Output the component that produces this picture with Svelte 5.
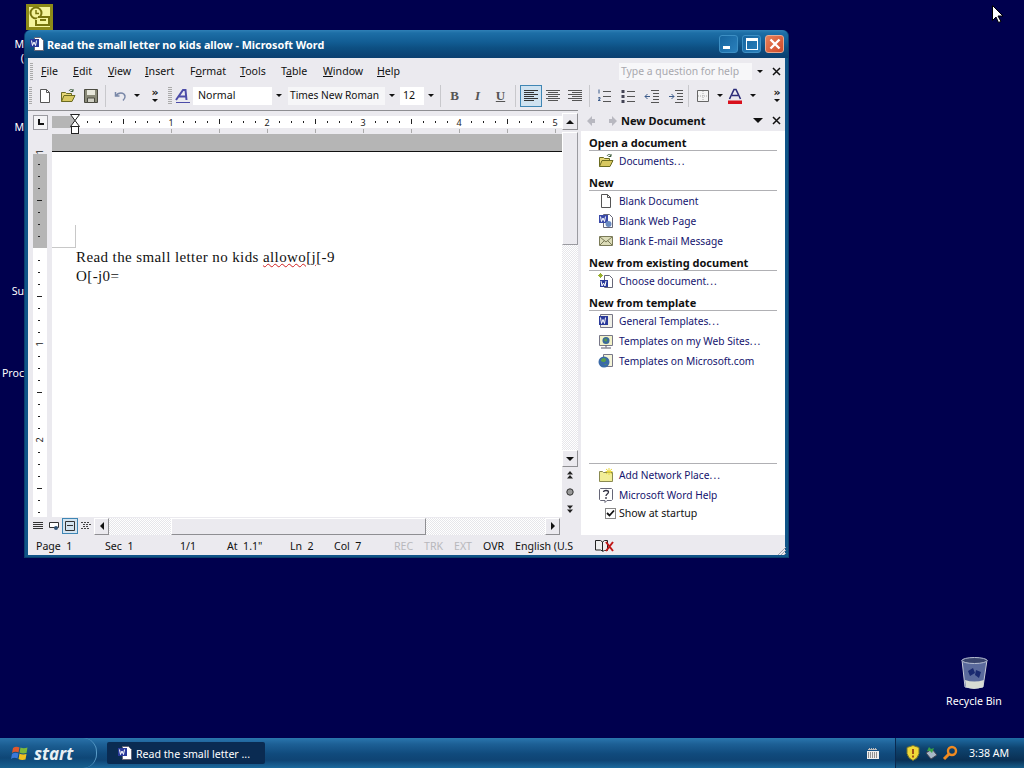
<script>
  const ui = '"Noto Sans", "DejaVu Sans", sans-serif'

  const icons = {
    doc: '<path d="M3.500 1.500h6l3 3v10h-9z" fill="#fff" stroke="#555"/><path d="M9.500 1.500v3h3" fill="none" stroke="#555"/>',
    open: '<path d="M1.500 13.500v-9h4l1 1h5v2" fill="#e8d878" stroke="#6b6b20"/><path d="M1.500 13.500l2.500-6h11l-3 6z" fill="#d8c860" stroke="#6b6b20"/><path d="M9 3c1-2 3-2 4 0M13 1v2.500h-2.500" fill="none" stroke="#3a5a3a"/>',
    save: '<path d="M1.500 1.500h13v13h-13z" fill="#8a8a78" stroke="#4a4a40"/><path d="M4 2h8v5H4z" fill="#e8e8dc"/><path d="M4.500 10h7v4.500h-7z" fill="#d0d0c4" stroke="#4a4a40"/>',
    undo: '<path d="M3.500 4v4h4M4 8c2-4 8-4 9 0 .5 2-1 3.500-2 4.500" fill="none" stroke="#7a88a8" stroke-width="1.500"/>',
    style: '<path d="M1 12L8 2h2.500l1 10M4 8.500h7" fill="none" stroke="#4c4ca8" stroke-width="2"/><path d="M1 14.500h14" stroke="#4c4ca8"/>',
    left: '<path d="M1 2.500h14M1 4.500h10M1 6.500h14M1 8.500h10M1 10.500h14M1 12.500h10" stroke="#333"/>',
    center: '<path d="M1 2.500h14M3 4.500h10M1 6.500h14M3 8.500h10M1 10.500h14M3 12.500h10" stroke="#555"/>',
    right: '<path d="M1 2.500h14M5 4.500h10M1 6.500h14M5 8.500h10M1 10.500h14M5 12.500h10" stroke="#555"/>',
    num: '<path d="M7 3.500h8M7 8.500h8M7 13.500h8" stroke="#555"/><path d="M3 1.500v4M2 10l2-.500v1.500l-2 1.500h2.500M2 12" fill="none" stroke="#3a5a8a"/>',
    bul: '<path d="M7 3.500h8M7 8.500h8M7 13.500h8" stroke="#555"/><path d="M1.500 2h3v3h-3zM1.500 7h3v3h-3zM1.500 12h3v3h-3z" fill="#445"/>',
    dec: '<path d="M7 2.500h8M9 5.500h6M9 8.500h6M9 11.500h6M7 14.500h8" stroke="#555"/><path d="M6 8.500H1M3.500 6L1 8.500 3.500 11" fill="none" stroke="#3a5a8a"/>',
    inc: '<path d="M7 2.500h8M9 5.500h6M9 8.500h6M9 11.500h6M7 14.500h8" stroke="#555"/><path d="M1 8.500h5M3.500 6L6 8.500 3.500 11" fill="none" stroke="#3a5a8a"/>',
    border: '<path d="M2.500 2.500h11v11h-11z" fill="#f4f4f4" stroke="#666"/><path d="M8 3v10M3 8h10" stroke="#aaa" stroke-dasharray="1 1"/>',
    color: '<path d="M2.500 11L7 1.500h2L13.500 11M5 7.500h6" fill="none" stroke="#2c2c78" stroke-width="1.600"/><path d="M1 12.500h14V16H1z" fill="#d8101c"/>',
    word: '<path d="M5.500 1.500h6l3 3v10h-9z" fill="#fff" stroke="#667"/><path d="M1 3h9v8H1z" fill="#2a3a9a"/><path d="M2.500 4.500l1 5 1.500-3.500 1.500 3.500 1-5" fill="none" stroke="#fff"/>',
    web: '<path d="M5.500 1.500h6l3 3v10h-9z" fill="#fff" stroke="#667"/><path d="M1 2h9v8H1z" fill="#3a4aa8"/><path d="M2.500 3.500l1 5 1.500-3.500 1.500 3.500 1-5" fill="none" stroke="#fff"/><circle cx="10.500" cy="11" r="3" fill="#6a8ac0"/>',
    mail: '<path d="M1.500 3.500h13v9h-13z" fill="#dcdcb8" stroke="#7a7a58"/><path d="M2 4l6 5 6-5M2 12l4.500-4.500M14 12L9.500 7.500" fill="none" stroke="#7a7a58"/>',
    choose: '<path d="M6.500 2.500h5l3 3v9h-8z" fill="#fff" stroke="#667"/><path d="M2 7h8v7H2z" fill="#2a3a9a"/><path d="M3 8l1 5 1.500-3 1.500 3 1-5" fill="none" stroke="#fff"/><path d="M1 1l3 3M4 1L1 4M2.500 0v5M0 2.500h5" stroke="#9ab030"/>',
    tmpl: '<path d="M2.500 1.500h12v13h-12z" fill="#f0f0e8" stroke="#778"/><path d="M1 3h9v9H1z" fill="#2a3a9a"/><path d="M2.500 4.500l1 6 1.500-4 1.500 4 1-6" fill="none" stroke="#fff"/>',
    site: '<path d="M1.500 2.500h13v10h-13z" fill="#f2f2c8" stroke="#778"/><circle cx="8" cy="7.500" r="3.500" fill="#3a6a9a"/><path d="M6 7c1-2 3-2 3 0s-2 2-3 0z" fill="#5a9a4a"/><path d="M8 12.500v2M3 15h10" stroke="#556"/>',
    ms: '<path d="M5.500 1.500h9v12h-9z" fill="#f4f4d8" stroke="#778"/><circle cx="6" cy="9" r="5.500" fill="#3a6aa8"/><path d="M3 7c2-3 5-2 5 0s-3 3-5 1zM6 12c1-1 2-1 3 0" fill="#5aa04a"/>',
    folderstar: '<path d="M1.500 14.500v-10h3l1 1h9v9z" fill="#f2ee98" stroke="#8a8a50"/><path d="M11 1v7M8 2l6 5M14 2L8 7M7.500 4.500h7" stroke="#e8d840"/>',
    help: '<path d="M2.500 1.500h11l1 1v10l-1 1H9l-2 2v-2H2.500l-1-1v-10z" fill="#fff" stroke="#667"/><path d="M5.500 5c0-2 5-2 5 0 0 2-2.500 2-2.500 4M8 10v2" fill="none" stroke="#334" stroke-width="1.300"/>'
  }

  const menu = [
    ['F', 'ile', 32], ['E', 'dit', 35], ['V', 'iew', 37], ['I', 'nsert', 45],
    ['F', 'ormat', 50, 1], ['T', 'ools', 41], ['T', 'able', 42, 1], ['W', 'indow', 54], ['H', 'elp', 40]
  ]

  const sections = [
    { title: 'Open a document', items: [['open', 'Documents...']] },
    { title: 'New', items: [['doc', 'Blank Document'], ['web', 'Blank Web Page'], ['mail', 'Blank E-mail Message']] },
    { title: 'New from existing document', items: [['choose', 'Choose document...']] },
    { title: 'New from template', items: [['tmpl', 'General Templates...'], ['site', 'Templates on my Web Sites...'], ['ms', 'Templates on Microsoft.com']] }
  ]

  const status = [
    ['Page  1', 69], ['Sec  1', 75], ['1/1', 47], ['At  1.1"', 63], ['Ln  2', 44], ['Col  7', 60],
    ['REC', 30, 1], ['TRK', 30, 1], ['EXT', 29, 1], ['OVR', 32], ['English (U.S', 79]
  ]

  // ruler marks, 96px to the inch, a tick every eighth
  const hTicks = Array.from({ length: 41 }, (_, i) => 23 + i * 12)
  const vTicks = Array.from({ length: 31 }, (_, i) => 4 + i * 12)
  const vNums = { 0: 1, 16: 1, 24: 2 }

  const desktopLabels = [
    ['M', 37], ['(', 51], ['M', 120], ['Su', 284], ['Proc', 366]
  ]
</script>

{#snippet icon(name, size = 16)}
  <svg width={size} height={size} viewBox="0 0 16 16">{@html icons[name]}</svg>
{/snippet}

{#snippet drop()}
  <span class="drop"></span>
{/snippet}

{#snippet tool(name, w = 23)}
  <span class="tool" style="width:{w}px">{@render icon(name)}</span>
{/snippet}

{#snippet chev()}
  <span class="chev"><b>»</b><span class="drop"></span></span>
{/snippet}

{#snippet closeX()}
  <span class="x"><svg width="9" height="9" viewBox="0 0 9 9"><path d="M1 1l7 7M8 1L1 8" stroke="#111" stroke-width="1.500" /></svg></span>
{/snippet}

{#snippet linkText(label)}
  <span>{label.replace('...', '')}{#if label.endsWith('...')}<span class="dots">...</span>{/if}</span>
{/snippet}

<div class="desktop" style="--ui:{ui}">
  <svg class="sched" width="27" height="26" viewBox="0 0 27 26">
    <rect x="0" y="0" width="27" height="26" fill="#8c8a18" />
    <rect x="3" y="3" width="21" height="20" fill="#f4f49c" />
    <circle cx="10" cy="9" r="5.500" fill="#f4f49c" stroke="#77750e" stroke-width="2" />
    <path d="M10 6v3.500h3" fill="none" stroke="#77750e" stroke-width="1.500" />
    <path d="M12 13h11v8H10v-5" fill="#f4f49c" stroke="#77750e" stroke-width="2" />
    <path d="M14 16h6" stroke="#77750e" stroke-width="2" />
  </svg>

  {#each desktopLabels as [t, y]}
    <span class="dlabel" style="top:{y}px">{t}</span>
  {/each}

  <div class="window">
    <div class="titlebar">
      {@render icon('word')}
      <span class="title">Read the small letter no kids allow - Microsoft Word</span>
      <div class="wbtns">
        <span class="wbtn"><i class="gmin"></i></span>
        <span class="wbtn"><i class="gmax"></i></span>
        <span class="wbtn close">
          <svg width="12" height="12" viewBox="0 0 12 12"><path d="M1.500 1.500l9 9M10.500 1.500l-9 9" stroke="#fff" stroke-width="2.400" /></svg>
        </span>
      </div>
    </div>

    <div class="client">
      <div class="menubar">
        <span class="grip"></span>
        {#each menu as [a, b, w, second]}
          <span class="mi" style="width:{w}px">
            {#if second}{a}<u>{b[0]}</u>{b.slice(1)}{:else}<u>{a}</u>{b}{/if}
          </span>
        {/each}
        <span class="ask">Type a question for help</span>
        <span class="askdrop">{@render drop()}</span>
        {@render closeX()}
      </div>

      <div class="toolbar">
        <span class="grip"></span>
        {@render tool('doc')}
        {@render tool('open')}
        {@render tool('save')}
        <span class="sep"></span>
        {@render tool('undo')}
        <span class="dropcell w11">{@render drop()}</span>
        <span class="chevcell">{@render chev()}</span>
        <span class="grip small"></span>
        {@render tool('style', 21)}
        <span class="combo c1"><span>Normal</span><em>{@render drop()}</em></span>
        <span class="combo c2"><span>Times New Roman</span><em>{@render drop()}</em></span>
        <span class="combo c3"><span>12</span><em>{@render drop()}</em></span>
        <span class="sep"></span>
        <span class="tool fmt b">B</span>
        <span class="tool fmt i">I</span>
        <span class="tool fmt u">U</span>
        <span class="sep w8"></span>
        <span class="tool on">{@render icon('left')}</span>
        {@render tool('center', 22)}
        {@render tool('right', 22)}
        <span class="sep"></span>
        {@render tool('num', 24)}
        {@render tool('bul', 24)}
        {@render tool('dec', 24)}
        {@render tool('inc', 24)}
        <span class="sep w2"></span>
        {@render tool('border', 26)}
        <span class="dropcell w7">{@render drop()}</span>
        {@render tool('color', 24)}
        <span class="dropcell w12">{@render drop()}</span>
        <span class="chevcell end">{@render chev()}</span>
      </div>

      <div class="main">
        <div class="docarea">
          <div class="docrow">
            <div class="vruler">
              <span class="tab"><i></i></span>
              <svg class="vstrip" width="14" height="369" viewBox="0 0 14 369">
                <rect y="6" width="14" height="94" fill="#b5b5b5" />
                <rect y="100" width="14" height="269" fill="#fff" />
                {#each vTicks as y, i}
                  {#if vNums[i]}
                    <text class="rnum" transform="translate(10 {y}) rotate(-90)" text-anchor="middle">{vNums[i]}</text>
                  {:else if i % 8 === 4}
                    <path d="M4 {y + .5}h5" stroke="#222" />
                  {:else if i % 8 !== 0}
                    <path d="M5 {y + .5}h2" stroke="#222" />
                  {/if}
                {/each}
              </svg>
            </div>
            <div class="pagecol">
              <svg class="hruler" width="510" height="41" viewBox="0 1 510 41">
                <rect y="1" width="510" height="41" fill="#ebeaef" />
                <rect y="6" width="510" height="12" fill="#fff" />
                <rect y="6" width="23" height="12" fill="#b5b5b5" />
                <rect y="24" width="510" height="18" fill="#b5b5b5" />
                <path d="M0 41.500h510" stroke="#111" />
                {#each hTicks as x, i}
                  {#if i % 8 === 0 && i > 0}
                    <text class="rnum" x={x} y="16" text-anchor="middle">{i / 8}</text>
                  {:else if i % 4 === 0 && i > 0}
                    <path d="M{x + .5} 9v5" stroke="#222" />
                  {:else if i > 0}
                    <path d="M{x + .5} 11v2" stroke="#222" />
                  {/if}
                  {#if i % 4 === 0}
                    <path d="M{x + .5} 19v4" stroke="#aaa" />
                  {/if}
                {/each}
                <path d="M18.500 4.500h9l-4.500 6zM18.500 16.500h9l-4.500-6z" fill="#fff" stroke="#222" />
                <rect x="19.500" y="16.500" width="7" height="7" fill="#fff" stroke="#222" />
              </svg>
              <div class="page">
                <div class="crop"></div>
                <p class="line">Read the small letter no kids <span class="typo">allowo[j</span>[-9</p>
                <p class="line">O[-j0=</p>
              </div>
            </div>
            <div class="vscroll">
              <span class="sbtn"><i class="tri up"></i></span>
              <span class="vthumb"></span>
              <span class="vtrack"></span>
              <span class="sbtn"><i class="tri down"></i></span>
              <div class="browse">
                <svg width="8" height="8" viewBox="0 0 8 8"><path d="M4 0L7 3.500H1zM4 4L7 7.500H1z" fill="#222" /></svg>
                <svg width="8" height="8" viewBox="0 0 8 8"><circle cx="4" cy="4" r="3.200" fill="#999" stroke="#333" /></svg>
                <svg width="8" height="8" viewBox="0 0 8 8"><path d="M4 8L7 4.500H1zM4 4L7 .5H1z" fill="#222" /></svg>
              </div>
            </div>
          </div>
          <div class="hbar">
            <span class="vb">
              <svg width="12" height="12" viewBox="0 0 12 12"><path d="M1 2.500h10M1 4.500h10M1 6.500h10M1 8.500h10" stroke="#333" /></svg>
            </span>
            <span class="vb">
              <svg width="12" height="12" viewBox="0 0 12 12"><path d="M1.500 2.500h9v5h-9z" fill="#fff" stroke="#333" /><circle cx="8" cy="8" r="2" fill="#357" /></svg>
            </span>
            <span class="vb active">
              <svg width="12" height="12" viewBox="0 0 12 12"><path d="M1.500 1.500h9v9h-9z" fill="none" stroke="#333" /><path d="M3 5.500h6" stroke="#333" /></svg>
            </span>
            <span class="vb">
              <svg width="12" height="12" viewBox="0 0 12 12"><path d="M1 2.500h8M3 4.500h8M3 6.500h6M1 8.500h8" stroke="#444" stroke-dasharray="2 1" /></svg>
            </span>
            <span class="sbtn h"><i class="tri lf"></i></span>
            <span class="htrack t1"></span>
            <span class="hthumb"></span>
            <span class="htrack t2"></span>
            <span class="sbtn h"><i class="tri rt"></i></span>
          </div>
        </div>

        <aside class="pane">
          <div class="panehead">
            <svg class="nav" width="32" height="12" viewBox="0 0 32 12"><path d="M1 6l5-5v3h3v4H6v3zM31 6l-5-5v3h-3v4h3v3z" fill="#b8b8c0" /></svg>
            <strong>New Document</strong>
            <i class="tri down big"></i>
            {@render closeX()}
          </div>
          <div class="panebody">
            {#each sections as s}
              <section>
                <h3>{s.title}</h3>
                {#each s.items as [ic, label]}
                  <div class="link">{@render icon(ic)}{@render linkText(label)}</div>
                {/each}
              </section>
            {/each}
            <div class="panefoot">
              <div class="link">{@render icon('folderstar')}{@render linkText('Add Network Place...')}</div>
              <div class="link">{@render icon('help')}{@render linkText('Microsoft Word Help')}</div>
              <label class="startup">
                <i class="check">
                  <svg width="9" height="9" viewBox="0 0 9 9"><path d="M1 4l2.500 2.500L8 1.500" fill="none" stroke="#111" stroke-width="1.800" /></svg>
                </i>
                Show at startup
              </label>
            </div>
          </div>
        </aside>
      </div>

      <div class="statusbar">
        {#each status as [t, w, off]}
          <span class:off style="width:{w}px">{t}</span>
        {/each}
        <svg class="book" width="22" height="14" viewBox="0 0 22 14">
          <path d="M1.500 1.500h5l2 1.500v9l-2-1H1.500zM8.500 3l2-1.500h3v10h-3l-2 1" fill="#eee" stroke="#222" />
          <path d="M12 3l7 9M19 3l-7 9" stroke="#c01818" stroke-width="2" />
        </svg>
        <svg class="gripper" width="12" height="12" viewBox="0 0 12 12">
          <path d="M11 3l-8 8M11 6l-5 5M11 9l-2 2" stroke="#a8a8b0" />
        </svg>
      </div>
    </div>
  </div>

  <div class="recycle">
    <svg width="27" height="32" viewBox="0 0 27 32">
      <path d="M1 3l3 27q9 3 18 0l4-27z" fill="#5a6a9c" stroke="#c8ccd8" />
      <ellipse cx="13.500" cy="3.500" rx="12.500" ry="3" fill="#39456e" stroke="#b8c0d4" />
      <path d="M7 14l5-3 2 5-5 3zM15 13l5 2-2 6-4-3z" fill="#1a2a70" />
      <path d="M4 23q9 3 19 0l-1 7q-9 3-17 0z" fill="#d8dcd4" />
    </svg>
    <span>Recycle Bin</span>
  </div>

  <svg class="cursor" width="12" height="18" viewBox="0 0 12 18">
    <path d="M.5.5v15l3.500-3.500 2.500 5.500 2.500-1L6 11h5z" fill="#fff" stroke="#000" />
  </svg>

  <div class="taskbar">
    <div class="start">
      <svg width="18" height="18" viewBox="0 0 18 18">
        <path d="M2 4q3-2 6.500-.5L7.500 8.500Q4 7 1 9z" fill="#e0582c" />
        <path d="M9.500 3.500q3 1.500 7 0L15.500 9q-4 1-7-.5z" fill="#7cb83c" />
        <path d="M1 10q3-2 6.500-.5L6.500 14.500Q3 13 0 15z" fill="#3c78d8" />
        <path d="M8.500 9.500q3 1.500 7 .5l-1 5.500q-4 1-7-.5z" fill="#f0c020" />
      </svg>
      <span>start</span>
    </div>
    <div class="task">
      {@render icon('word')}
      <span>Read the small letter ...</span>
    </div>
    <div class="kbd">
      <svg width="14" height="14" viewBox="0 0 14 14">
        <path d="M2 3h1v-1h1v1h1v-1h1v1h1v-1h1v1h1v-1h1v1h1v1H2z" fill="#bbb" />
        <rect x="1" y="5" width="12" height="8" fill="#eee" />
        <path d="M2 7h10M2 9h10M2 11h10" stroke="#333" stroke-dasharray="1 1" />
      </svg>
    </div>
    <div class="tray">
      <svg width="14" height="16" viewBox="0 0 14 16">
        <path d="M7 .5l6 2v6q-1 5-6 7-5-2-6-7v-6z" fill="#f0d838" stroke="#77752c" />
        <path d="M7 4v5M7 10.500v2" stroke="#8a3010" stroke-width="1.600" />
      </svg>
      <svg width="14" height="16" viewBox="0 0 14 16">
        <path d="M2 8l5 6 6-4-5-6z" fill="#a8b8c8" stroke="#445" />
        <path d="M3 6l2-4 2 2 3-1-2 5-2-2z" fill="#38a048" />
      </svg>
      <svg width="16" height="16" viewBox="0 0 16 16">
        <circle cx="10" cy="6" r="4" fill="none" stroke="#f08a20" stroke-width="2.400" />
        <path d="M7 9l-5 5" stroke="#f08a20" stroke-width="3" />
      </svg>
      <span>3:38 AM</span>
    </div>
  </div>
</div>

<style>
  :global(body) { margin: 0; overflow: hidden; }
  .desktop {
    position: relative; width: 1024px; height: 768px; overflow: hidden;
    background: #00004e; font: 10.6px/1 var(--ui); color: #111;
  }
  svg { display: block; flex: none; }
  .sched { position: absolute; left: 26px; top: 4px; }
  .dlabel { position: absolute; right: 1000px; color: #fff; line-height: 14px; }

  .window {
    position: absolute; left: 24px; top: 30px; width: 765px; height: 528px;
    box-sizing: border-box; display: flex; flex-direction: column;
    border: 1px solid #0c3f6c; border-top: 0; border-radius: 6px 6px 0 0;
    background: #0f5488; padding: 0 3px 2px 3px;
  }
  .titlebar {
    height: 28px; margin: 0 -3px; padding: 0 4px 0 4px; display: flex; align-items: center; gap: 2px;
    border-radius: 6px 6px 0 0;
    background: linear-gradient(#2f80b6 0, #1d6ea6 3px, #125d94 12px, #0d4f82 18px, #0b3f70 28px);
  }
  .title { color: #fff; font-size: 10.8px; font-weight: 700; padding-top: 2px; }
  .wbtns { margin-left: auto; display: flex; gap: 4px; }
  .wbtn {
    width: 19px; height: 18px; border: 1px solid #3d8fc4; border-radius: 3px; box-sizing: border-box;
    background: linear-gradient(135deg, #16649e, #2a80bc); display: flex; align-items: center; justify-content: center;
  }
  .wbtn.close { background: linear-gradient(135deg, #e88058, #cf4a2a); border-color: #e8a890; }
  .gmin { width: 7px; height: 3px; background: #fff; margin: 7px 5px 0 0; }
  .gmax { width: 10px; height: 8px; border: 1px solid #fff; border-top-width: 3px; }

  .client { flex: 1; min-height: 0; display: flex; flex-direction: column; background: #ebeaef; }

  .menubar { height: 25px; flex: none; display: flex; align-items: center; padding: 1px 0 0 1px; box-sizing: border-box; }
  .grip {
    width: 3px; height: 17px; margin: 0 8px 0 1px; flex: none;
    background: repeating-linear-gradient(#aaa 0 1px, transparent 1px 2px);
  }
  .mi { flex: none; white-space: nowrap; }
  .ask {
    margin-left: auto; width: 131px; height: 17px; line-height: 16px; padding-left: 2px; background: #f7f7f9;
    color: #a8a8ae; white-space: nowrap; font-size: 10.4px;
  }
  .askdrop { width: 16px; height: 17px; display: flex; align-items: center; justify-content: center; }
  .x { width: 17px; flex: none; display: flex; justify-content: center; }

  .toolbar { height: 26px; flex: none; display: flex; align-items: center; padding-bottom: 1px; box-sizing: border-box; }
  .toolbar .grip { margin: 0 1px 0 1px; }
  .toolbar .grip.small { margin: 0; width: 4px; }
  .tool { width: 23px; height: 22px; flex: none; display: flex; align-items: center; justify-content: center; box-sizing: border-box; }
  .tool.on { width: 22px; background: #cfe2f0; border: 1px solid #3f86b4; }
  .fmt { font: 700 13px "Liberation Serif", serif; color: #555; }
  .fmt.i { font-style: italic; }
  .fmt.u { text-decoration: underline; }
  .sep { width: 6px; height: 22px; flex: none; position: relative; }
  .sep::after { content: ''; position: absolute; left: 3px; top: 0; bottom: 0; width: 1px; background: #c8c8cc; }
  .sep.w8 { width: 8px; }
  .sep.w2 { width: 2px; }
  .sep.w2::after { left: 0; }
  .dropcell { height: 22px; display: flex; align-items: center; justify-content: center; flex: none; }
  .w11 { width: 11px; } .w7 { width: 7px; } .w12 { width: 12px; }
  .chevcell { width: 26px; flex: none; display: flex; justify-content: center; }
  .chevcell.end { width: 16px; margin-left: auto; }
  .chev { display: flex; flex-direction: column; align-items: center; gap: 3px; }
  .chev b { font: 700 11px/6px "DejaVu Sans", sans-serif; color: #111; }
  .drop { display: block; width: 0; height: 0; border: 3px solid transparent; border-top: 3px solid #111; border-bottom: 0; }
  .combo { height: 18px; display: flex; align-items: center; background: #fff; flex: none; white-space: nowrap; }
  .combo > span { flex: 1; padding-left: 2px; }
  .c2 > span { font-size: 10.2px; }
  .combo em { width: 13px; height: 18px; flex: none; background: #ebeaef; display: flex; align-items: center; justify-content: center; }
  .c1 { width: 92px; margin-right: 3px; padding-left: 3px; box-sizing: border-box; }
  .c2 { width: 110px; margin-right: 2px; background: #f6f6f8; }
  .c3 { width: 37px; }
  .c3 > span { padding-left: 3px; }

  .main { flex: 1; min-height: 0; display: flex; }
  .docarea { width: 550px; flex: none; display: flex; flex-direction: column; margin-top: 1px; border-top: 1px solid #8e8e92; }
  .docrow { flex: 1; min-height: 0; display: flex; }

  .vruler { width: 24px; flex: none; position: relative; }
  .tab {
    position: absolute; left: 5px; top: 4px; width: 15px; height: 15px; box-sizing: border-box;
    background: #f4f4f6; border: 1px solid #9a9aa0;
  }
  .tab i { position: absolute; left: 4px; top: 3px; width: 6px; height: 6px; border-left: 2px solid #111; border-bottom: 2px solid #111; box-sizing: border-box; }
  .vstrip { position: absolute; left: 5px; top: 37px; }
  .rnum { font: 9px "Noto Sans", sans-serif; fill: #222; }

  .pagecol { flex: 1; min-width: 0; display: flex; flex-direction: column; }
  .page { flex: 1; background: #fff; padding: 96px 0 0 24px; position: relative; }
  .crop { position: absolute; left: 0; top: 73px; width: 23px; height: 22px; border: 1px solid #c8c8c8; border-width: 0 1px 1px 0; }
  .line { margin: 0; font: 15px/19px "Liberation Serif", serif; color: #111; white-space: nowrap; letter-spacing: .4px; }
  .typo { text-decoration: underline wavy #d02020 1px; text-underline-offset: 1px; }

  .vscroll { width: 16px; flex: none; display: flex; flex-direction: column; padding-top: 2px; }
  .sbtn {
    width: 16px; height: 17px; flex: none; box-sizing: border-box; background: #ebeaef;
    border: 1px solid; border-color: #fff #8e8e92 #8e8e92 #fff;
    display: flex; align-items: center; justify-content: center;
  }
  .sbtn.h { height: 17px; width: 15px; }
  .vthumb { height: 113px; flex: none; background: #ebeaef; border: 1px solid; border-color: #fff #9a9aa0 #9a9aa0 #fff; box-sizing: border-box; margin-top: 2px; }
  .vtrack, .htrack { background: repeating-conic-gradient(#fff 0 25%, #e6e6ea 0 50%) 0 0 / 2px 2px; }
  .vtrack { flex: 1; }
  .browse { height: 50px; flex: none; background: #ebeaef; display: flex; flex-direction: column; align-items: center; justify-content: space-around; }
  .tri { display: block; width: 0; height: 0; border: 4px solid transparent; }
  .tri.up { border-top: 0; border-bottom-color: #111; }
  .tri.down { border-bottom: 0; border-top-color: #111; }
  .tri.lf { border-left: 0; border-right-color: #111; }
  .tri.rt { border-right: 0; border-left-color: #111; }

  .hbar { height: 18px; flex: none; display: flex; align-items: center; padding: 0 18px 0 2px; }
  .vb { width: 16px; height: 16px; flex: none; box-sizing: border-box; display: flex; align-items: center; justify-content: center; border: 1px solid transparent; }
  .vb.active { background: #d4e4f0; border-color: #3f86b4; }
  .htrack { height: 17px; }
  .htrack.t1 { width: 62px; flex: none; }
  .htrack.t2 { flex: 1; }
  .hthumb { width: 255px; height: 17px; flex: none; box-sizing: border-box; background: #ebeaef; border: 1px solid; border-color: #fff #8e8e92 #8e8e92 #fff; }

  .pane { flex: 1; min-width: 0; margin: 3px 0 0 3px; display: flex; flex-direction: column; }
  .panehead { height: 19px; flex: none; display: flex; align-items: center; padding: 0 0 2px 5px; box-sizing: border-box; }
  .panehead strong { margin-left: 3px; font-size: 11px; flex: 1; }
  .panehead .big { border-width: 5px; border-bottom: 0; margin-right: 5px; }
  .panebody { flex: 1; min-height: 0; background: #fff; display: flex; flex-direction: column; padding: 4px 8px 0 8px; }
  section { margin-bottom: 4px; }
  h3 { margin: 0; height: 16px; box-sizing: border-box; font-size: 11px; line-height: 15px; font-weight: 700; border-bottom: 1px solid #b0b0b4; white-space: nowrap; }
  .link { height: 20px; box-sizing: border-box; padding: 0 0 0 9px; display: flex; align-items: center; gap: 5px; color: #14146e; white-space: nowrap; font-size: 10.2px; }
  .dots { letter-spacing: 1.2px; }
  .panefoot { margin-top: auto; border-top: 1px solid #b0b0b4; padding: 1px 0 14px; }
  .startup { height: 16px; display: flex; align-items: center; gap: 3px; padding-left: 16px; }
  .check { width: 11px; height: 11px; box-sizing: border-box; border: 1px solid #888; display: block; background: #fff; }

  .statusbar { height: 20px; flex: none; display: flex; align-items: center; padding: 2px 0 0 8px; box-sizing: border-box; position: relative; }
  .statusbar span { flex: none; white-space: pre; }
  .statusbar .off { color: #b8b8bc; }
  .gripper { position: absolute; right: -2px; bottom: -1px; }

  .recycle { position: absolute; left: 944px; top: 657px; width: 60px; display: flex; flex-direction: column; align-items: center; gap: 7px; color: #fff; }
  .cursor { position: absolute; left: 992px; top: 5px; }

  .taskbar {
    position: absolute; left: 0; right: 0; bottom: 0; height: 30px; display: flex; align-items: center;
    background: linear-gradient(#2a76ae, #1d6096 6px, #104a7c 16px, #0f4474 22px, #1c6a9e);
  }
  .start {
    width: 97px; height: 30px; flex: none; box-sizing: border-box; display: flex; align-items: center; gap: 5px; padding-left: 11px;
    border-radius: 0 14px 14px 0; border-right: 1px solid #5a9cc8;
    background: linear-gradient(#2a72aa, #1a5c90 8px, #0e4676 20px, #17608f);
    color: #e8f0f4; font-size: 17px; font-weight: 700; font-style: italic;
  }
  .task {
    width: 158px; height: 22px; flex: none; margin-left: 10px; display: flex; align-items: center; gap: 3px; padding-left: 10px; box-sizing: border-box;
    background: #0a2b52; border-radius: 2px; color: #fff; white-space: nowrap;
  }
  .task span { padding-top: 2px; }
  .kbd { margin-left: auto; width: 30px; display: flex; justify-content: center; margin-right: 7px; }
  .tray {
    width: 129px; height: 30px; flex: none; box-sizing: border-box; display: flex; align-items: center; gap: 4px; padding-left: 10px;
    border-left: 1px solid #0a2a50; background: linear-gradient(#1f6ca4, #0e4470 10px, #0a3054 22px, #175d8a); color: #fff;
  }
  .tray span { margin-left: 7px; white-space: nowrap; }
</style>
